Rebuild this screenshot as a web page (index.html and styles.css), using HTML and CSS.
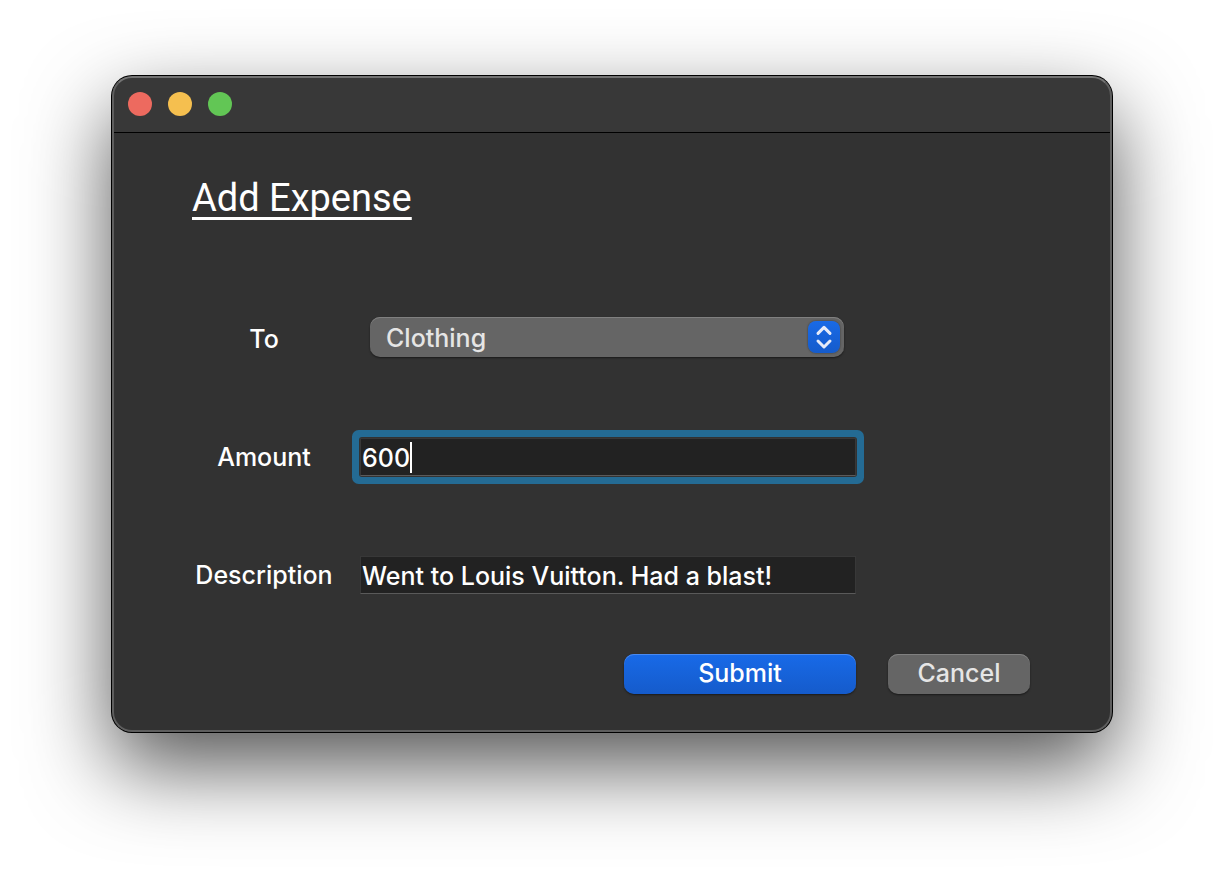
FILE: index.html
```html
<!DOCTYPE html>
<html lang="en">
<head>
<meta charset="utf-8">
<meta name="viewport" content="width=device-width, initial-scale=1">
<title>Add Expense</title>
<link rel="stylesheet" href="styles.css">
</head>
<body>
<main class="window">
  <header class="titlebar">
    <button class="light light-close" type="button" aria-label="Close"></button>
    <button class="light light-minimize" type="button" aria-label="Minimize"></button>
    <button class="light light-zoom" type="button" aria-label="Zoom"></button>
  </header>
  <form class="form">
    <h1 class="title">Add Expense</h1>
    <div class="fields">
      <label class="label" for="to">To</label>
      <div class="popup">
        <select class="select" id="to">
          <option>Clothing</option>
        </select>
        <svg class="stepper" viewBox="0 0 32 32" aria-hidden="true">
          <path d="M10 12.4 16 6.4l6 6M10 20l6 6 6-6"/>
        </svg>
      </div>
      <label class="label" for="amount">Amount</label>
      <div class="entry entry-active">
        <input class="input" id="amount" type="text" value="600">
        <span class="caret"></span>
      </div>
      <label class="label" for="description">Description</label>
      <div class="entry">
        <input class="input" id="description" type="text" value="Went to Louis Vuitton. Had a blast!">
      </div>
    </div>
    <div class="actions">
      <button class="button button-primary" type="submit">Submit</button>
      <button class="button button-secondary" type="button">Cancel</button>
    </div>
  </form>
</main>
</body>
</html>
```
FILE: styles.css
```css
* {
  box-sizing: border-box;
}

body {
  min-height: 100vh;
  margin: 0;
  padding: 76px 112px;
  background: #fff;
  color: #fff;
  font: 500 25px/32px Inter, "Liberation Sans", sans-serif;
}

.window {
  position: relative;
  overflow: hidden;
  border-radius: 20px;
  background: #323232;
  box-shadow: 0 0 0 1px #000, 0 34px 84px rgba(0, 0, 0, 0.68);
}

.window::after {
  content: "";
  position: absolute;
  inset: 0;
  border: 2px solid #5e5e5e;
  border-top-color: #737373;
  border-radius: 20px;
  pointer-events: none;
}

.titlebar {
  display: flex;
  gap: 16px;
  padding: 16px;
  border-bottom: 1px solid #000;
  background: #383838;
}

.light {
  width: 24px;
  height: 24px;
  padding: 0;
  border: 0;
  border-radius: 50%;
}

.light-close {
  background: #ed6a5f;
}

.light-minimize {
  background: #f5bf4f;
}

.light-zoom {
  background: #62c655;
}

.form {
  padding: 41px 82px 38px 80px;
}

.title {
  margin: 0 0 95px;
  font-family: Roboto, "Liberation Sans", sans-serif;
  font-size: 38px;
  line-height: 48px;
  font-weight: 400;
  text-decoration: underline 3px;
  text-decoration-skip-ink: none;
  text-underline-offset: 6px;
}

.fields {
  display: grid;
  grid-template-columns: 144px 1fr;
  grid-auto-rows: 44px;
  gap: 74px 24px;
  align-items: center;
  margin-right: 174px;
}

.label {
  text-align: center;
}

.popup {
  position: relative;
  align-self: start;
  margin: 0 12px 0 10px;
}

.select {
  display: block;
  width: 100%;
  height: 40px;
  padding: 1px 48px 0 16px;
  appearance: none;
  border: 0;
  border-radius: 10px;
  background: #656565;
  box-shadow: inset 0 1px #808080, 0 1px 2px rgba(0, 0, 0, 0.5);
  color: #e5e5e5;
  font: inherit;
}

.stepper {
  position: absolute;
  top: 4px;
  right: 4px;
  width: 32px;
  height: 32px;
  border-radius: 8px;
  background: linear-gradient(#196ae6, #155bcb);
  box-shadow: 0 0 2px rgba(0, 0, 0, 0.5);
  fill: none;
  stroke: #e6ebf8;
  stroke-width: 3;
  stroke-linecap: round;
  stroke-linejoin: round;
  pointer-events: none;
}

.entry {
  position: relative;
}

.entry-active {
  border-radius: 2px;
  box-shadow: 0 0 0 1px #323232, 0 0 0 8px #246b94;
}

.input {
  display: block;
  width: 100%;
  height: 38px;
  padding: 2px 1px 0;
  border: 1px solid #383838;
  border-bottom-color: #5a5a5a;
  border-radius: 0;
  outline: 0;
  background: #222;
  color: #fff;
  font: inherit;
}

.caret {
  position: absolute;
  top: 4px;
  left: 50px;
  width: 2px;
  height: 31px;
  background: #fff;
}

.actions {
  display: flex;
  justify-content: flex-end;
  gap: 32px;
  margin-top: 57px;
}

.button {
  height: 40px;
  padding: 0 0 2px;
  border: 0;
  border-radius: 10px;
  font: inherit;
}

.button-primary {
  width: 232px;
  background: linear-gradient(#186ae8, #155bcb);
  box-shadow: inset 0 1px #4a8af0, 0 1px 2px rgba(0, 0, 0, 0.5);
  color: #fff;
}

.button-secondary {
  width: 142px;
  background: #656565;
  box-shadow: inset 0 1px #808080, 0 1px 2px rgba(0, 0, 0, 0.5);
  color: #e5e5e5;
}
```
